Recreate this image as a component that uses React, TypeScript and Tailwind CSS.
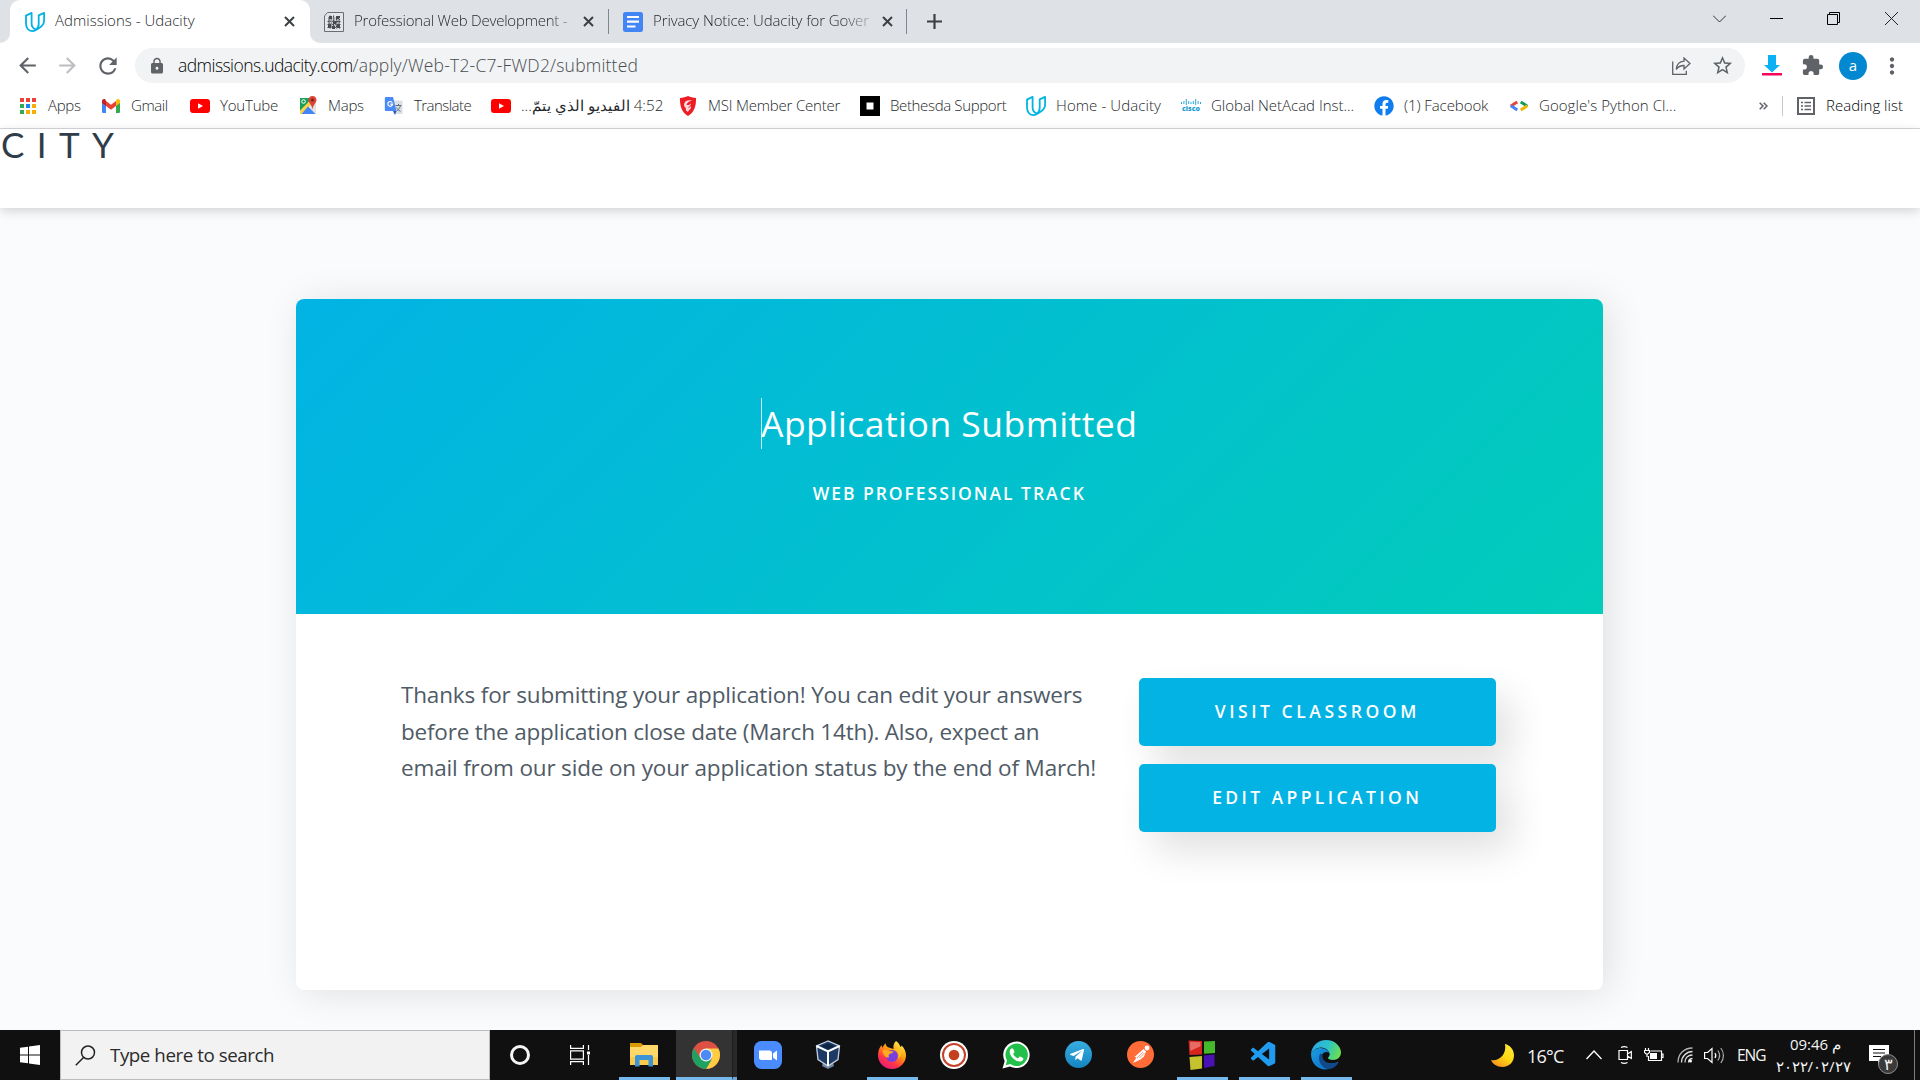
import type { ReactNode } from "react";
import { MdArrowBack, MdArrowForward, MdRefresh, MdLock, MdStarBorder, MdExtension, MdMoreVert } from "react-icons/md";
import { FaTelegramPlane, FaFacebook } from "react-icons/fa";
import { VscVscode } from "react-icons/vsc";

/* ---------- small logos ---------- */

const UdacityMark = () => (
  <svg width="20" height="20" viewBox="0 0 20 20" fill="none" stroke="#02b3e4" strokeWidth="1.8" strokeLinejoin="round">
    <path d="M6.6.9 1 3.6V11.500c0 4.500 2.600 7.600 6 7.600 1.500 0 2.600-.4 3.900-1.200l3.300-2c3.200-1.900 4.900-4 4.900-7.400V.9l-5.400 2.500V12c0 2.100-.6 4.200-2.900 5.500-2.700-.9-4.200-3-4.200-6z" />
  </svg>
);

const QrPage = () => (
  <svg width="20" height="20" viewBox="0 0 20 20" fill="none">
    <path d="M3.500.5h16v19H.5V4z" fill="#e3e5e8" stroke="#6b6e72" />
    <path d="M5 4h3v3H5zM12 4h3v3h-3zM4 12h3v4H4zM9 9h3v3H9zM13 12h3v4h-3zM8 14h3v3H8z" fill="#45484c" />
    <path d="M3.500 9.500h13M9.500 3.500v13M4 6h12M12.500 4v13M3.500 12.500h13M6 3.500v13M15.500 4v13M3.500 15.500h13M4 8h12M4 11h12M4 14h12" stroke="#4a4d51" strokeDasharray="2 1 1 .7" />
  </svg>
);

const DocsIcon = () => (
  <svg width="20" height="20" viewBox="0 0 20 20">
    <rect width="20" height="20" rx="2.500" fill="#4285f4" />
    <path d="M4 5h12M4 9.700h12M4 14.500h8.500" stroke="#fff" strokeWidth="2.200" />
  </svg>
);

const CloseX = () => (
  <svg width="11" height="11" viewBox="0 0 11 11" stroke="#3c4043" strokeWidth="2">
    <path d="m1 1 9 9M10 1l-9 9" />
  </svg>
);

const AppsGrid = () => (
  <svg width="20" height="20" viewBox="0 0 20 20">
    <path d="M2 2h4v4H2zM8 2h4v4H8zM14 2h4v4h-4z" fill="#ea4335" />
    <path d="M2 8h4v4H2zM2 14h4v4H2z" fill="#34a853" />
    <path d="M8 8h4v4H8z" fill="#1a87f0" />
    <path d="M14 8h4v4h-4zM8 14h4v4H8zM14 14h4v4h-4z" fill="#fbab05" />
  </svg>
);

const GmailIcon = () => (
  <svg width="20" height="20" viewBox="0 0 20 20">
    <path d="M1 4.500v11c0 1 .6 1.500 1.500 1.500H5V8z" fill="#4285f4" />
    <path d="M19 4.500v11c0 1-.6 1.500-1.500 1.500H15V8z" fill="#34a853" />
    <path d="M15 5.500V10l4-3V5c0-1.800-2-2.600-3.400-1.600z" fill="#fbbc04" />
    <path d="M5 10V5l5 3.800L15 5v5l-5 3.800z" fill="#ea4335" />
    <path d="M1 5v2l4 3V5.200L4.400 3.400C3 2.400 1 3.200 1 5z" fill="#c5221f" />
  </svg>
);

const YoutubeIcon = () => (
  <svg width="20" height="20" viewBox="0 0 20 20">
    <rect y="3" width="20" height="14" rx="3" fill="#f00" />
    <path d="M8 7.200v5.600l5-2.800z" fill="#fff" />
  </svg>
);

const MapsIcon = () => (
  <svg width="20" height="20" viewBox="0 0 20 20">
    <path d="M2 2h13L2 17z" fill="#1e9f57" />
    <path d="M2 18 18 3v14l-1 1z" fill="#e3e3e3" />
    <path d="m2 14.500 10-10 2.500 2.500L3.500 18H2z" fill="#fdd14a" />
    <path d="m10 10.500 7.500 7.500h-14z" fill="#4285f4" />
    <circle cx="5.500" cy="5.500" r="1.800" fill="none" stroke="#fff" />
    <path d="M14.500 0C12 0 10.500 1.900 10.500 4c0 3 3.400 4.600 4 9.500.6-4.900 4-6.500 4-9.500 0-2.100-1.500-4-4-4z" fill="#db4437" />
    <circle cx="14.500" cy="4" r="1.500" fill="#7d1f17" />
  </svg>
);

const TranslateIcon = () => (
  <svg width="20" height="20" viewBox="0 0 20 20">
    <path d="M7 4.500h11.500V18H10z" fill="#dcdfe3" />
    <path d="M11.500 9.500h6M14.500 8v1.500M16.500 9.500c-.6 2.500-2 4.200-4 5.500M12.500 11.500c.8 1.500 2 2.800 4 3.800" stroke="#60717a" fill="none" />
    <path d="M1.500 1H9l3.500 14H2.500C1.300 15 .8 14.500.8 13.500V2z" fill="#4a8af4" />
    <path d="M9 15h3.500L11 19z" fill="#2a56c6" />
    <path d="M8.300 6.700a2.400 2.400 0 1 0 .3 1.500H6.200" stroke="#fff" strokeWidth="1.200" fill="none" />
  </svg>
);

const MsiIcon = () => (
  <svg width="20" height="20" viewBox="0 0 20 20">
    <path d="M10 0c2.500 1.200 5 1.800 8 1.900.2 8-1.600 14.200-8 18.100C3.600 16.100 1.800 9.900 2 1.900 5 1.800 7.500 1.200 10 0z" fill="#ee1c25" />
    <path d="M14 4.500c-4-1-7 .2-7.800 3C5.500 10 7 11.500 8 12c-.7 1-.3 2.800 2 4 .5-2 3.500-3 3-6-.8 1.300-2 1.800-3.200 1.500 1.500-1 3.200-2 3.200-4-1.500 1.500-3 1.800-4.500 1.500C9 6.500 11 5.500 14 4.500z" fill="#fbd9da" />
  </svg>
);

const BethesdaIcon = () => (
  <svg width="20" height="20" viewBox="0 0 20 20">
    <path d="M0 0h20v20H0z" />
    <path d="M6.500 6.500h7v7h-7z" fill="#fff" />
  </svg>
);

const CiscoIcon = () => (
  <span className="flex w-5 flex-col items-center">
    <svg width="20" height="6" viewBox="0 0 20 6" stroke="#2aa9dc" strokeWidth="1">
      <path d="M.5 3v2M2.900 2v3M5.300 0v6M7.700 2v3M10 3v2M12.300 2v3M14.700 0v6M17.100 2v3M19.500 3v2" />
    </svg>
    <span className="text-[7px] font-extrabold leading-[7px] text-[#1c9cd0]">cisco</span>
  </span>
);

const PythonClassIcon = () => (
  <svg width="20" height="20" viewBox="0 0 20 20" fill="none" strokeWidth="3">
    <path d="M8.300 6 5 8 1.800 10.200" stroke="#ea4335" />
    <path d="m1.800 9.800 3.200 2 3.300 2.200" stroke="#4285f4" />
    <path d="m11.700 6 3.300 2 3.200 2.200" stroke="#0f9d58" />
    <path d="M18.200 9.800 15 12l-3.300 2" stroke="#f4b400" />
  </svg>
);

/* ---------- browser chrome ---------- */

function Tab({ icon, title, className, titleClass }: { icon: ReactNode; title: string; className: string; titleClass: string }) {
  return (
    <div className={`flex h-[43px] shrink-0 items-center ${className}`}>
      {icon}
      <span className={`ml-[10px] whitespace-nowrap pb-[3px] text-[15px] leading-[22px] text-[#26292c] ${titleClass}`}>{title}</span>
      <CloseX />
    </div>
  );
}

function TabStrip() {
  return (
    <div className="flex h-[43px] bg-[#dee1e6]">
      <div className="flex w-[10px] items-end bg-white">
        <div className="h-full w-full rounded-br-[10px] bg-[#dee1e6]" />
      </div>
      <div className="w-[300px] bg-[#dee1e6]">
        <Tab
          icon={<UdacityMark />}
          title="Admissions - Udacity"
          className="rounded-t-[10px] bg-white pl-[15px]"
          titleClass="mr-[4px] w-[225px] font-light tracking-[0.02px]"
        />
      </div>
      <div className="flex w-[298px] bg-white">
        <div className="flex w-full rounded-bl-[10px] bg-[#dee1e6]">
          <Tab
            icon={<QrPage />}
            title="Professional Web Development -"
            className="pl-[14px]"
            titleClass="mr-[13px] w-[216px] font-light tracking-[-0.22px] [mask-image:linear-gradient(to_right,#000_90%,#0006)]"
          />
        </div>
      </div>
      <div className="mt-[9px] h-[25px] w-px bg-[#80868b]" />
      <Tab
        icon={<DocsIcon />}
        title="Privacy Notice: Udacity for Gover"
        className="w-[297px] pl-[14px]"
        titleClass="mr-[10px] w-[219px] font-light tracking-[-0.1px] [mask-image:linear-gradient(to_right,#000_86%,#0003)]"
      />
      <div className="mt-[9px] h-[25px] w-px bg-[#80868b]" />
      <svg className="ml-[20px] mt-[14px]" width="15" height="15" viewBox="0 0 15 15" stroke="#3c4043" strokeWidth="2.200">
        <path d="M7.500 0v15M0 7.500h15" />
      </svg>
      <div className="ml-auto mr-[22px] mt-[12px] flex">
        <svg className="mr-[44px]" width="13" height="13" viewBox="0 0 13 13" fill="none" stroke="#333">
          <path d="m0 3.500 6.500 6.500L13 3.500" />
        </svg>
        <svg className="mr-[44px]" width="13" height="13" viewBox="0 0 13 13" stroke="#000">
          <path d="M0 6.500h13" />
        </svg>
        <svg className="mr-[45px]" width="13" height="13" viewBox="0 0 13 13" fill="none" stroke="#000">
          <path d="M.5 2.500h10v10H.5zM2.500 2V.5h10v10H11" />
        </svg>
        <svg width="13" height="13" viewBox="0 0 13 13" stroke="#222">
          <path d="m0 0 13 13M13 0 0 13" />
        </svg>
      </div>
    </div>
  );
}

function Toolbar() {
  return (
    <div className="flex h-[45px] items-center bg-white pl-[15px] text-[#5f6368]">
      <MdArrowBack size={25} />
      <MdArrowForward size={25} className="ml-[15px] text-[#bcbec1]" />
      <MdRefresh size={26} className="ml-[15px]" />
      <div className="ml-[14px] flex h-[35px] w-[1610px] items-center rounded-full bg-[#f1f3f4] pl-[13px] pr-[11px]">
        <MdLock size={18} />
        <span className="ml-[12px] pb-px text-[17.5px] font-light leading-[24px] tracking-[-0.55px] text-[#050506]">admissions.udacity.com</span>
        <span className="pb-px text-[17.5px] font-light leading-[24px] tracking-[0.2px] text-[#484c50]">/apply/Web-T2-C7-FWD2/submitted</span>
        <svg className="ml-auto mr-[20px]" width="19" height="18" viewBox="0 0 19 18" fill="none" stroke="#5f6368" strokeWidth="1.300">
          <path d="M.7 4.500v12.800h13.600v-3.500" />
          <path d="M12 1v3.200c-5 .3-7.300 3.300-7.700 8.300 1.700-2.800 4.200-4 7.700-4V12l6-5.500z" />
        </svg>
        <MdStarBorder size={23} />
      </div>
      <svg className="ml-[17px]" width="20" height="21" viewBox="0 0 20 21">
        <path d="M6 0h8v10h4l-8 7.500L2 10h4z" fill="#0cb0f5" />
        <path d="M0 18h20v2.500H0z" fill="#f5065c" />
      </svg>
      <MdExtension size={23} className="ml-[19px]" />
      <div className="ml-[15px] flex size-7 items-center justify-center rounded-full bg-[#0288d1] pb-px text-[15px] text-white">a</div>
      <MdMoreVert size={26} className="ml-[12px]" />
    </div>
  );
}

const bookmarks: { icon: ReactNode; label: string; box: string; text: string; rtl?: boolean }[] = [
  { icon: <AppsGrid />, label: "Apps", box: "w-[83px]", text: "tracking-[-0.3px]" },
  { icon: <GmailIcon />, label: "Gmail", box: "w-[89px]", text: "tracking-[-0.4px]" },
  { icon: <YoutubeIcon />, label: "YouTube", box: "w-[108px]", text: "tracking-[-0.2px]" },
  { icon: <MapsIcon />, label: "Maps", box: "w-[86px]", text: "tracking-[-0.25px]" },
  { icon: <TranslateIcon />, label: "Translate", box: "w-[107px]", text: "tracking-[-0.55px]" },
  { icon: <YoutubeIcon />, label: "4:52 الفيديو الذي يتمّ...", box: "w-[187px]", text: "text-[15.2px]", rtl: true },
  { icon: <MsiIcon />, label: "MSI Member Center", box: "w-[182px]", text: "tracking-[-0.2px]" },
  { icon: <BethesdaIcon />, label: "Bethesda Support", box: "w-[166px]", text: "tracking-[-0.35px]" },
  { icon: <UdacityMark />, label: "Home - Udacity", box: "w-[155px]", text: "tracking-[0.09px]" },
  { icon: <CiscoIcon />, label: "Global NetAcad Inst...", box: "w-[193px]", text: "tracking-[-0.02px]" },
  { icon: <FaFacebook size={20} color="#0f7df0" />, label: "(1) Facebook", box: "w-[135px]", text: "tracking-[-0.08px]" },
  { icon: <PythonClassIcon />, label: "Google's Python Cl...", box: "w-[170px]", text: "tracking-[0.06px]" },
];

function BookmarksBar() {
  return (
    <div className="flex h-[41px] items-center border-b border-[#d5d7da] bg-white pb-[5px] pl-[18px] text-[15px] font-light leading-[22px] text-[#26292c]">
      {bookmarks.map((b, i) => (
        <div key={i} className={`flex shrink-0 items-center gap-[10px] whitespace-nowrap ${b.box}`}>
          {b.icon}
          <span dir={b.rtl ? "rtl" : "ltr"} className={`pb-px ${b.text}`}>{b.label}</span>
        </div>
      ))}
      <div className="ml-auto flex items-center pr-[16px]">
        <svg width="9" height="8" viewBox="0 0 9 8" fill="none" stroke="#5f6368" strokeWidth="1.500">
          <path d="m.7.7 3.300 3.300-3.300 3.300M4.700.7 8 4 4.700 7.300" />
        </svg>
        <div className="ml-[14px] mr-[14px] h-5 w-px bg-[#c6c9cd]" />
        <svg width="18" height="18" viewBox="0 0 18 18" fill="none" stroke="#5f6368">
          <path d="M1 1h16v16H1z" strokeWidth="2" />
          <path d="M4 5.500h2M4 9h2M4 12.500h2M7.500 5.500H14M7.500 9H14M7.500 12.500H14" strokeWidth="1.500" />
        </svg>
        <span className="ml-[11px] w-[78px] whitespace-nowrap pb-px tracking-[0.02px] text-[#050506]">Reading list</span>
      </div>
    </div>
  );
}

/* ---------- page ---------- */

function ActionButton({ label, spacing }: { label: string; spacing: string }) {
  return (
    <button className={`h-[68px] w-[357.500px] rounded-[5px] bg-[#02b3e4] text-[17.5px] font-semibold text-white shadow-[15px_19px_38px_rgba(0,0,0,0.12)] ${spacing}`}>
      {label}
    </button>
  );
}

function Page() {
  return (
    <main className="min-h-0 flex-1 bg-[#fafbfd]">
      <header className="h-[79px] bg-white pl-px shadow-[0_3px_10px_rgba(0,0,0,0.16)]">
        <span className="block font-['Lato'] text-[35px] leading-[31px] tracking-[12.4px] text-[#2e3d49]">CITY</span>
      </header>
      <section className="ml-[295.500px] mt-[91px] h-[691px] w-[1307.500px] rounded-[8px] bg-white shadow-[6px_3px_38px_rgba(0,0,0,0.11)]">
        <div className="flex h-[315px] flex-col items-center rounded-t-[8px] bg-[linear-gradient(135deg,#02b3e4_0%,#02ccba_100%)] pt-[99px] text-white">
          <div className="flex h-[51px] items-center border-l border-white/80">
            <h1 className="-ml-px whitespace-nowrap text-[35.500px] leading-[51px] tracking-[0.49px]">Application Submitted</h1>
          </div>
          <p className="mt-[31px] text-[17.500px] font-semibold leading-[26px] tracking-[1.970px]">WEB PROFESSIONAL TRACK</p>
        </div>
        <div className="flex pl-[105.500px] pt-[63px]">
          <p className="w-[737.500px] text-[22.500px] leading-[36.500px] tracking-[-0.160px] text-[#4f5b66]">
            Thanks for submitting your application! You can edit your answers
            <br />
            <span className="tracking-[-0.210px]">before the application close date (March 14th). Also, expect an</span>
            <br />
            email from our side on your application status by the end of March!
          </p>
          <div className="flex flex-col gap-[18px] pt-[0.500px]">
            <ActionButton label="VISIT CLASSROOM" spacing="tracking-[3.550px]" />
            <ActionButton label="EDIT APPLICATION" spacing="tracking-[3.400px]" />
          </div>
        </div>
      </section>
    </main>
  );
}

/* ---------- taskbar ---------- */

const ExplorerIcon = () => (
  <svg width="28" height="24" viewBox="0 0 28 24">
    <path d="M0 0h11l2 2v4H0z" fill="#d99a05" />
    <path d="M0 4h11l2-2h15v20H0z" fill="#ffd869" />
    <path d="M0 14h28v8H0z" fill="#fbc94b" />
    <path d="M5 23.500V14c0-1.200.8-2 2-2h14c1.200 0 2 .8 2 2v9.500h-4.500V17h-9v6.500z" fill="#3a94d6" />
  </svg>
);

const ChromeIcon = () => (
  <svg width="28" height="28" viewBox="0 0 28 28">
    <circle cx="14" cy="14" r="14" fill="#dd5144" />
    <path d="M14 7.500h12.400A14 14 0 0 1 14 28l5.700-10.500z" fill="#ffcd41" />
    <path d="M1.900 7A14 14 0 0 0 14 28l5.700-9.500L8.300 17.200z" fill="#1da261" />
    <circle cx="14" cy="14" r="6.500" fill="#f1f1f1" />
    <circle cx="14" cy="14" r="5.200" fill="#4c8bf5" />
  </svg>
);

const ZoomIcon = () => (
  <svg width="28" height="28" viewBox="0 0 28 28">
    <rect width="28" height="28" rx="7.500" fill="#4a8cff" />
    <path d="M5 9.500h10.500c1.700 0 2.500.9 2.500 2.500v7H7.500C5.900 19 5 18 5 16.500zM19 12.500l4-3v10l-4-3z" fill="#fff" />
  </svg>
);

const VBoxIcon = () => (
  <svg className="-ml-1" width="26" height="29" viewBox="0 0 26 29">
    <path d="M8 22h10l1 4-6 3-6-3z" fill="#7185a5" />
    <path d="M13 1 1.500 6 3 19.500 13 26l10-6.500L24.500 6z" fill="#1c3a63" stroke="#c3d0e4" strokeWidth="1.300" />
    <path d="M1.500 6 13 11.500 24.500 6M13 11.500V26" fill="none" stroke="#fff" strokeWidth="2" />
    <path d="m13 3.500-7 2.800 7 3 7-3z" fill="#0d2443" />
  </svg>
);

const FirefoxIcon = () => (
  <svg width="28" height="28" viewBox="0 0 28 28">
    <defs>
      <linearGradient id="fx" x1=".8" y1="0" x2=".2" y2="1">
        <stop offset="0" stopColor="#fff44f" />
        <stop offset=".4" stopColor="#ff980e" />
        <stop offset=".7" stopColor="#ff3647" />
        <stop offset="1" stopColor="#e31587" />
      </linearGradient>
    </defs>
    <path d="M18 0c3 2 4 4.500 4.500 6 .7-.2 1-1 1-1.500C26 6.500 28 10.500 28 14.500 28 22 21.700 28 14 28S0 22 0 14.500C0 10 1.300 6.500 3.800 4c0 1 .1 2 .5 2.700L7.500 2c0 2 1 3.500 2.500 4.300L15.500 8C15 4.500 16 2 18 0z" fill="url(#fx)" />
    <circle cx="14" cy="15" r="6" fill="#7a3ee0" />
    <path d="M4.500 9.500c3-1.500 5-.5 6.500.5l4.500.5c-.5 1.500-2.500 2-4 2.500-1 .5-1 2-.5 3.200C8 17.500 5 14 4.500 9.500z" fill="#ffab1f" />
    <path d="M16 8c4.500 1.500 6 6 3.500 9.500 4.500-1.500 4.500-6.500 2.500-9.500z" fill="#ffc41f" />
  </svg>
);

const RecorderIcon = () => (
  <svg width="28" height="28" viewBox="0 0 28 28">
    <circle cx="14" cy="14" r="14" fill="#fff" />
    <circle cx="14" cy="14" r="11" fill="none" stroke="#c5432a" strokeWidth="2" />
    <circle cx="14" cy="14" r="5.300" fill="#c5401f" />
  </svg>
);

const WhatsappIcon = () => (
  <svg width="28" height="28" viewBox="0 0 28 28">
    <path d="M14.500.5A13.300 13.300 0 0 0 2.700 20L.5 27.500l7.500-2A13.300 13.300 0 1 0 14.500.5z" fill="#fff" />
    <path d="M14.500 2.600A11.200 11.200 0 0 0 5 19.500L3.700 24.200l4.600-1.200A11.200 11.200 0 1 0 14.500 2.600z" fill="#22c04a" />
    <path d="M9.700 7.500c-.6 0-2 1.200-2 3.200 0 4.300 5.300 9.800 10.300 9.800 2 0 3.300-1.300 3.400-3 0-.5-3.200-2.200-3.700-2-.6.200-1.200 1.800-1.800 1.800-1 0-4.600-3.100-4.600-4.300 0-.5 1.300-1.300 1.200-2C12.400 10.300 11.300 7.500 10.700 7.500z" fill="#fff" />
  </svg>
);

const TelegramIcon = () => (
  <span className="flex size-[27px] items-center justify-center rounded-full bg-linear-to-b from-[#37aee2] to-[#1484c0] pr-[2px] pt-px text-white">
    <FaTelegramPlane size={16} />
  </span>
);

const PostmanIcon = () => (
  <svg width="27" height="27" viewBox="0 0 27 27">
    <circle cx="13.500" cy="13.500" r="13.500" fill="#ff6c37" />
    <circle cx="20" cy="7" r="2.400" fill="#fff" />
    <path d="m16.500 8 2.500 2.500-2 5-3.500 3L6 22l3.500-5.500-2-.5z" fill="#fff" />
    <path d="m16 11-6 6M17.500 12l-5 5" stroke="#ff6c37" strokeWidth=".7" />
  </svg>
);

const CodeBlocksIcon = () => (
  <svg width="28" height="30" viewBox="0 0 28 30">
    <path d="M.5.5 14 1v13.500L1.500 15z" fill="#d5251c" />
    <path d="M16 1.500 27 1v12l-11 .8z" fill="#46b82c" />
    <path d="M1.500 17 14 16v12.500L2.500 30z" fill="#c5c22d" />
    <path d="m16 15.500 10.500-1V26L16 28z" fill="#4a12b5" />
    <path d="M2 1.800 12.500 2.200v4L2.300 11z" fill="#f39c93" opacity=".6" />
  </svg>
);

const EdgeIcon = () => (
  <svg width="30" height="30" viewBox="0 0 30 30">
    <defs>
      <linearGradient id="edgeTop" x1="0" y1=".3" x2="1" y2=".6">
        <stop offset="0" stopColor="#2ea8e6" />
        <stop offset=".5" stopColor="#2cc3c9" />
        <stop offset="1" stopColor="#6be04c" />
      </linearGradient>
      <linearGradient id="edgeLeft" x1="0" y1="0" x2="1" y2="1">
        <stop offset="0" stopColor="#1b9de2" />
        <stop offset="1" stopColor="#0d6cc4" />
      </linearGradient>
    </defs>
    <path d="M0 14C.7 6 7 0 15 0c9 0 15 6.500 15 12.500 0 4.500-3.500 7.500-8 7.500-3.500 0-5-1.200-5-2 0-.7 1.500-1.500 1.500-4 0-3.500-4-6.500-8.500-6.500S1.500 10.500 0 14z" fill="url(#edgeTop)" />
    <path d="M0 14c1.500-3.500 5.500-6 9.500-6 5 0 9 3 9 6-2-2.500-8-1.500-8.500 3.500-.5 5 3.500 10.500 9 11C10 32 0 25.500 0 14z" fill="url(#edgeLeft)" />
    <path d="M9.500 13.500c-2.500 3.500-1.500 8 1 11.500 2 3 5.500 4.500 8.500 4 4-1 7-3.500 8.500-6.500.3-.7-.3-1-1-.7-6 2.800-13.500-.3-13.500-6z" fill="#114a8b" />
    <path d="M18.500 14c0-2-3.500-3-6-1-1 1-1.200 2.500-1 4 .5 3 3 5.500 6.500 6 3 .3 6-.2 8-1.500l1-1.700c-1.500.7-3 1.100-5 1.100-3.500-.1-5.500-1.700-5.500-2.900 0-.8 2-1.700 2-4z" fill="#101010" />
  </svg>
);

const apps: { icon: ReactNode; running?: boolean; active?: boolean }[] = [
  { icon: <ExplorerIcon />, running: true },
  { icon: <ChromeIcon />, active: true },
  { icon: <ZoomIcon /> },
  { icon: <VBoxIcon /> },
  { icon: <FirefoxIcon />, running: true },
  { icon: <RecorderIcon /> },
  { icon: <WhatsappIcon /> },
  { icon: <TelegramIcon /> },
  { icon: <PostmanIcon /> },
  { icon: <CodeBlocksIcon />, running: true },
  { icon: <VscVscode size={30} color="#1f9cf0" />, running: true },
  { icon: <EdgeIcon />, running: true },
];

function AppButton({ icon, running, active }: { icon: ReactNode; running?: boolean; active?: boolean }) {
  if (active) {
    return (
      <div className="flex h-full w-[62px] shrink-0 pl-px">
        <div className="flex w-14 flex-col items-center border-b-[3px] border-[#76b9ed] bg-[#333] pl-[3px] pt-[11px]">{icon}</div>
        <div className="w-[5px] border-b-[3px] border-l border-b-[#6ba5d4] border-l-[#1c1c1c] bg-[#292929]" />
      </div>
    );
  }
  return (
    <div className="flex h-full w-[62px] shrink-0 flex-col items-center">
      <div className="flex h-[47px] items-center pt-[2px]">{icon}</div>
      {running && <div className="h-[3px] w-[51px] bg-[#76b9ed]" />}
    </div>
  );
}

function Tray() {
  return (
    <div className="ml-auto flex h-full items-center text-[#f4f4f4]">
      <svg width="23" height="23" viewBox="0 0 23 23">
        <defs>
          <linearGradient id="moon" x1="1" y1="0" x2=".4" y2="1">
            <stop offset="0" stopColor="#ffec3d" />
            <stop offset=".6" stopColor="#ffd814" />
            <stop offset="1" stopColor="#f79a1c" />
          </linearGradient>
        </defs>
        <path d="M14 0c5 1 9 5.500 9 11.500C23 18 18 23 11.500 23 6 23 1.500 20 0 16c8 1.500 16-5.500 14-16z" fill="url(#moon)" />
      </svg>
      <span className="ml-[13px] w-[59px] pt-[3px] text-[18px] tracking-[-0.8px]">16°C</span>
      <svg width="16" height="10" viewBox="0 0 16 10" fill="none" stroke="#fff" strokeWidth="1.300">
        <path d="m.5 9 7.500-8 7.500 8" />
      </svg>
      <svg className="ml-[16px]" width="14" height="18" viewBox="0 0 14 18" fill="none" stroke="#fff" strokeWidth="1.200">
        <path d="M1 4.500h8.500v9H1zM9.500 8l3.800-2.500v7L9.500 10M3 1.500C5 .5 7.500.5 9.500 1.500M3 16.500c2 1 4.500 1 6.500 0" />
      </svg>
      <svg className="ml-[12px]" width="20" height="14" viewBox="0 0 20 14" fill="none" stroke="#fff" strokeWidth="1.200">
        <path d="M6.500 3h11v9.500h-13V8M17.500 6H19v3.500h-1.500M1.500 0v2.500M4.500 0v2.500M.5 2.500h5v2L3.800 6H2.200L.5 4.500zM3 6v3" />
        <path d="M6 5h7v6H6z" fill="#fff" stroke="none" />
      </svg>
      <svg className="ml-[13px]" width="16" height="16" viewBox="0 0 16 16" fill="none" strokeWidth="1.300">
        <path d="M1 15.500C1 7 7 1 15.500 1" stroke="#b5b5b5" />
        <path d="M4.500 15.500c0-6 5-11 11-11M8 15.500C8 11 11 8 15.500 8" stroke="#ddd" />
        <path d="M11.500 15.500c0-2.500 1.500-4 4-4" stroke="#ddd" />
        <circle cx="13.500" cy="14" r="1.500" fill="#fff" />
      </svg>
      <svg className="ml-[11px]" width="21" height="17" viewBox="0 0 21 17" fill="none" stroke="#fff" strokeWidth="1.200">
        <path d="M.6 5.500h3L8 1.500v14l-4.400-4h-3zM11 6c1 1.500 1 3.500 0 5" />
        <path d="M13.800 3.500c2.200 3 2.200 7 0 10M16.800 1c3.500 4.500 3.500 10.500 0 15" stroke="#aaa" />
      </svg>
      <span className="ml-[12px] w-[29px] pt-px text-[15.500px] tracking-[-1px]">ENG</span>
      <div className="ml-[13px] flex w-[71px] flex-col items-center whitespace-nowrap text-[15px] leading-[22px]">
        <span className="ml-[2px] tracking-[-0.6px]">09:46 م</span>
        <bdo dir="ltr" className="-ml-[3px] tracking-[-0.44px]">٢٠٢٢/٠٢/٢٧</bdo>
      </div>
      <div className="relative ml-[19px] mr-[25px] h-[20px] w-[20px]">
        <svg width="20" height="20" viewBox="0 0 20 20">
          <path d="M0 0h20v16h-7l-4 4v-4H0z" fill="#fff" />
          <path d="M4 4.500h12M4 8h12M4 11.500h8" stroke="#101010" strokeWidth="1.200" />
        </svg>
        <span className="absolute left-[9px] top-[9px] flex size-5 items-center justify-center rounded-full border border-[#8d8d8d] bg-[#3a3a3a] text-[16px] leading-none">٣</span>
      </div>
      <div className="mr-[5px] h-full w-px bg-[#7d7d7d]" />
    </div>
  );
}

function Taskbar() {
  return (
    <footer className="flex h-[50px] items-center bg-[#101010]">
      <svg className="ml-[20px] mr-[20px]" width="20" height="20" viewBox="0 0 20 20" fill="#fff">
        <path d="m0 2.800 8-1.100v7.800H0zM9 1.500 20 0v9.500H9zM0 10.500h8v7.800l-8-1.100zM9 10.500h11V20L9 18.500z" />
      </svg>
      <div className="flex h-full w-[430px] items-center border border-[#bdbdbd] bg-[#f2f2f2] pl-[14px]">
        <svg width="21" height="21" viewBox="0 0 21 21" fill="none" stroke="#222" strokeWidth="1.500">
          <circle cx="13" cy="7.500" r="6.500" />
          <path d="M8.500 12.500.8 20.300" />
        </svg>
        <span className="ml-[14px] text-[18.750px] tracking-[-0.450px] text-[#2b2b2b]">Type here to search</span>
      </div>
      <div className="ml-[20px] size-5 rounded-full border-[3px] border-[#f4f4f4]" />
      <svg className="ml-[40px] mr-[23px]" width="20" height="20" viewBox="0 0 20 20" fill="none" stroke="#fff" strokeWidth="1.200">
        <path d="M.6 0v3.400h12.800V0M.6 5.800h12.800v8.400H.6zM.6 20v-3.400h12.800V20M18.500 0v5M18.500 10v10" />
        <path d="M17 6.500h3v3h-3z" fill="#fff" stroke="none" />
      </svg>
      {apps.map((a, i) => (
        <AppButton key={i} {...a} />
      ))}
      <Tray />
    </footer>
  );
}

export default function App() {
  return (
    <div className="flex h-[1080px] w-[1920px] flex-col overflow-hidden bg-white font-['Open_Sans','Noto_Sans',sans-serif]">
      <TabStrip />
      <Toolbar />
      <BookmarksBar />
      <Page />
      <Taskbar />
    </div>
  );
}
